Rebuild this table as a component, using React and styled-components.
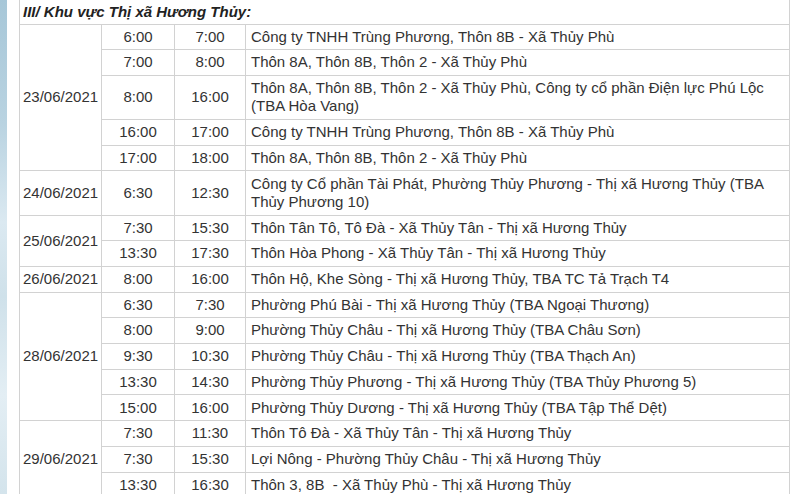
import React from "react";
import styled, { createGlobalStyle } from "styled-components";

const Global = createGlobalStyle`
  html, body { margin: 0; padding: 0; background: #fff; }
  body { font-family: "Liberation Sans", Arial, sans-serif; color: #333; }
`;

const Page = styled.div`
  display: flex;
  width: 800px;
  height: 494px;
  overflow: hidden;
  background: #fff;
`;

const SideStrip = styled.div`
  flex: 0 0 7px;
  background: linear-gradient(
    180deg,
    #a7c7d8 0%,
    #b9d3e1 25%,
    #dbe9f1 45%,
    #cfe1ea 60%,
    #e3eef4 80%,
    #d4e4ec 100%
  );
`;

const Main = styled.div`
  flex: 1;
  padding-left: 12px;
`;

const Table = styled.table`
  width: 771px;
  border-collapse: collapse;
  table-layout: fixed;
  font-size: 15px;
  line-height: 18.5px;
  color: #333;
`;

const TitleCell = styled.td`
  border: 1px solid #d2d2d2;
  border-top: none;
  padding: 3px 3px 2px;
  height: 18px;
  font-weight: bold;
  font-style: italic;
  color: #222;
`;

const Cell = styled.td`
  border: 1px solid #d2d2d2;
  padding: 3.1px 4px;
  vertical-align: middle;
  text-align: ${(p) => (p.$center ? "center" : "left")};
  padding-left: ${(p) => (p.$date ? "3px" : p.$center ? "4px" : "5px")};
`;

const data = [
  {
    date: "23/06/2021",
    rows: [
      ["6:00", "7:00", "Công ty TNHH Trùng Phương, Thôn 8B - Xã Thủy Phù"],
      ["7:00", "8:00", "Thôn 8A, Thôn 8B, Thôn 2 - Xã Thủy Phù"],
      ["8:00", "16:00", "Thôn 8A, Thôn 8B, Thôn 2 - Xã Thủy Phù, Công ty cổ phần Điện lực Phú Lộc (TBA Hòa Vang)"],
      ["16:00", "17:00", "Công ty TNHH Trùng Phương, Thôn 8B - Xã Thủy Phù"],
      ["17:00", "18:00", "Thôn 8A, Thôn 8B, Thôn 2 - Xã Thủy Phù"],
    ],
  },
  {
    date: "24/06/2021",
    rows: [
      ["6:30", "12:30", "Công ty Cổ phần Tài Phát, Phường Thủy Phương - Thị xã Hương Thủy (TBA Thủy Phương 10)"],
    ],
  },
  {
    date: "25/06/2021",
    rows: [
      ["7:30", "15:30", "Thôn Tân Tô, Tô Đà - Xã Thủy Tân - Thị xã Hương Thủy"],
      ["13:30", "17:30", "Thôn Hòa Phong - Xã Thủy Tân - Thị xã Hương Thủy"],
    ],
  },
  {
    date: "26/06/2021",
    rows: [["8:00", "16:00", "Thôn Hộ, Khe Sòng - Thị xã Hương Thủy, TBA TC Tả Trạch T4"]],
  },
  {
    date: "28/06/2021",
    rows: [
      ["6:30", "7:30", "Phường Phú Bài - Thị xã Hương Thủy (TBA Ngoại Thương)"],
      ["8:00", "9:00", "Phường Thủy Châu - Thị xã Hương Thủy (TBA Châu Sơn)"],
      ["9:30", "10:30", "Phường Thủy Châu - Thị xã Hương Thủy (TBA Thạch An)"],
      ["13:30", "14:30", "Phường Thủy Phương - Thị xã Hương Thủy (TBA Thủy Phương 5)"],
      ["15:00", "16:00", "Phường Thủy Dương - Thị xã Hương Thủy (TBA Tập Thể Dệt)"],
    ],
  },
  {
    date: "29/06/2021",
    rows: [
      ["7:30", "11:30", "Thôn Tô Đà - Xã Thủy Tân - Thị xã Hương Thủy"],
      ["7:30", "15:30", "Lợi Nông - Phường Thủy Châu - Thị xã Hương Thủy"],
      ["13:30", "16:30", "Thôn 3, 8B\u00a0 - Xã Thủy Phù - Thị xã Hương Thủy"],
    ],
  },
];

export default function App() {
  return (
    <>
      <Global />
      <Page>
        <SideStrip />
        <Main>
          <Table>
            <colgroup>
              <col style={{ width: "82px" }} />
              <col style={{ width: "73px" }} />
              <col style={{ width: "71px" }} />
              <col />
            </colgroup>
            <tbody>
              <tr>
                <TitleCell colSpan={4}>III/ Khu vực Thị xã Hương Thủy:</TitleCell>
              </tr>
              {data.map((g) =>
                g.rows.map((r, i) => (
                  <tr key={g.date + i}>
                    {i === 0 && (
                      <Cell $date rowSpan={g.rows.length}>
                        {g.date}
                      </Cell>
                    )}
                    <Cell $center>{r[0]}</Cell>
                    <Cell $center>{r[1]}</Cell>
                    <Cell>{r[2]}</Cell>
                  </tr>
                ))
              )}
            </tbody>
          </Table>
        </Main>
      </Page>
    </>
  );
}
